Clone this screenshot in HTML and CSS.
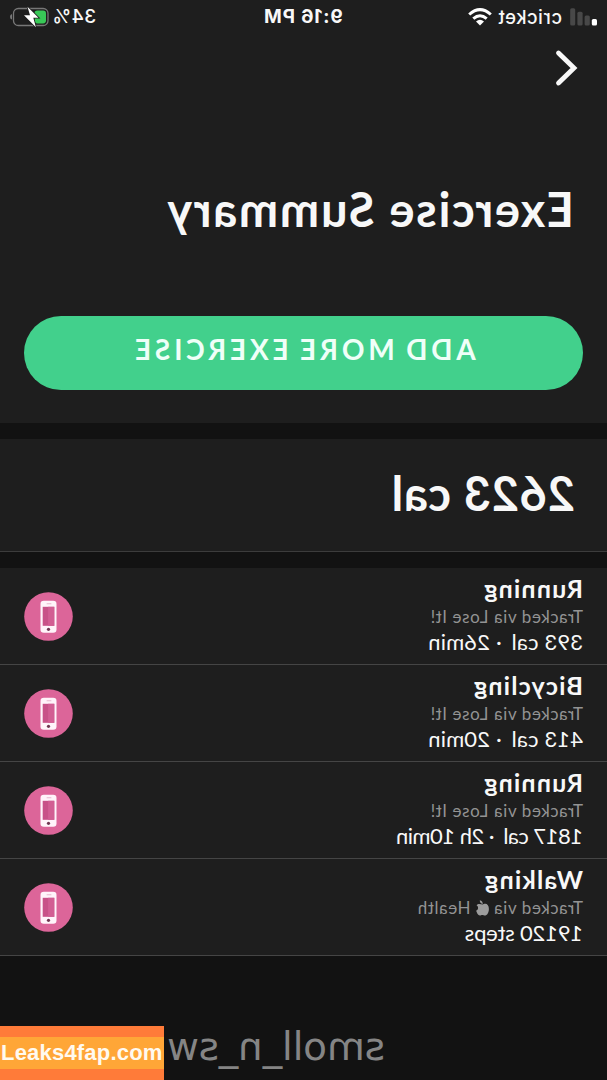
FILE: index.html
```
<!DOCTYPE html>
<html lang="en">
<head>
<meta charset="utf-8">
<title>Exercise Summary</title>
<link rel="stylesheet" href="styles.css">
</head>
<body>
<svg class="defs" width="0" height="0" aria-hidden="true">
  <symbol id="phone" viewBox="0 0 49 49">
    <circle cx="24.5" cy="24.5" r="24.3" fill="#dc6599"/>
    <rect x="16.5" y="8.7" width="16" height="32" rx="3.3" fill="#fff4fa"/>
    <rect x="18.7" y="14.8" width="11.6" height="19" fill="#c85288"/>
    <path d="M18.7 14.8h6.2v19h-6.2z" fill="#d25e93"/>
    <rect x="21.5" y="11.3" width="5" height="1" rx=".5" fill="#e7b8ce"/>
    <circle cx="24.5" cy="37.3" r="1.6" fill="#713752"/>
  </symbol>
</svg>
<main class="screen">
  <header class="top">
    <div class="status">
      <div class="carrier">
        <svg width="28" height="18" viewBox="0 0 28 18"><rect x="0" y="11" width="5.2" height="6.6" rx="1.5" fill="#fff"/><g fill="#484848"><rect x="7.2" y="7.5" width="5.2" height="10.1" rx="1.5"/><rect x="14.4" y="3.7" width="5.2" height="13.9" rx="1.5"/><rect x="21.8" y=".3" width="5" height="17.3" rx="1.5"/></g></svg>
        <span class="network">cricket</span>
        <svg class="wifi" width="24" height="18" viewBox="0 0 24 18" fill="none" stroke="#fff" stroke-width="3"><path d="M1.2 6.5Q12-3.2 22.8 6.5M5.3 10.7Q12 4.8 18.7 10.7"/><path d="M8 13.4q4-3.3 8 0l-4 4.2z" fill="#fff" stroke="none"/></svg>
      </div>
      <span class="clock">9:16 PM</span>
      <div class="power">
        <span class="percent">34%</span>
        <svg width="40" height="22" viewBox="0 0 40 22"><rect x="1" y="2.5" width="34.5" height="17" rx="4.8" fill="none" stroke="#777" stroke-width="1.3"/><path d="M37 8q2 .4 2 2.8T37 13.6z" fill="#777"/><rect x="3" y="4.6" width="11.5" height="12.8" rx="2.8" fill="#38c957"/><path d="M21.5.8 10.5 11.8h5.2l-2.6 9.4L25 9.2h-6z" fill="#fff" stroke="#1e1e1e" stroke-width="1.6" paint-order="stroke"/></svg>
      </div>
    </div>
    <svg class="back" width="24" height="38" viewBox="0 0 24 38"><path d="M19.5 4 4 19l15.5 15" fill="none" stroke="#f8f8f8" stroke-width="4.8" stroke-linecap="round"/></svg>
    <h1 class="title">Exercise Summary</h1>
    <button class="add">ADD MORE EXERCISE</button>
  </header>
  <section class="total">2623 cal</section>
  <section class="list">
    <article class="row"><div class="info"><h2 class="name">Running</h2><p class="source">Tracked via Lose It!</p><p class="detail">393 cal <span class="dot">·</span> 26min</p></div><svg class="badge"><use href="#phone"/></svg></article>
    <article class="row"><div class="info"><h2 class="name">Bicycling</h2><p class="source">Tracked via Lose It!</p><p class="detail">413 cal <span class="dot">·</span> 20min</p></div><svg class="badge"><use href="#phone"/></svg></article>
    <article class="row"><div class="info"><h2 class="name">Running</h2><p class="source">Tracked via Lose It!</p><p class="detail detail-long">1817 cal <span class="dot">·</span> 2h 10min</p></div><svg class="badge"><use href="#phone"/></svg></article>
    <article class="row"><div class="info"><h2 class="name">Walking</h2><p class="source">Tracked via <svg class="apple" width="13" height="16" viewBox="0 0 13 16" fill="#9c9c9c"><path d="M9.2.2Q9.3 3.5 6.2 3.9 6.2 1 9.2.2M6.5 4.4c1.1 0 2-.6 3.3-.5 1.1 0 2 .5 2.6 1.4-2.2 1.5-1.9 4.5.5 5.5-.8 2-1.9 4.8-3.7 4.8-1 0-1.5-.6-2.5-.6s-1.6.6-2.5.6C1.8 15.6 0 12 .1 8.9 0 5.8 1.7 3.8 3.7 3.8c1.2 0 1.9.6 2.8.6z"/></svg> Health</p><p class="detail detail-steps">19120 steps</p></div><svg class="badge"><use href="#phone"/></svg></article>
  </section>
  <footer class="user">smoll_n_sw</footer>
</main>
<aside class="banner"><span class="banner-text">Leaks4fap.com</span></aside>
</body>
</html>
```
FILE: styles.css
```
* { box-sizing: border-box; }
body { margin: 0; background: #121212; font-family: Lato, sans-serif; color: #f8f8f8; }
h1, h2, p { margin: 0; }
.defs { position: absolute; }
.screen { width: 607px; height: 1080px; overflow: hidden; transform: scaleX(-1); white-space: nowrap; background: #121212; }
.top { display: flex; flex-direction: column; height: 423px; background: #1e1e1e; }
.status { display: grid; grid-template-columns: 1fr auto 1fr; align-items: center; height: 33px; padding: 0 9px 0 10px; font-family: Inter, sans-serif; }
.carrier, .power { display: flex; align-items: center; }
.power { justify-content: flex-end; gap: 3px; }
.network { margin-left: 7px; font-size: 18.5px; font-weight: 500; letter-spacing: .55px; }
.wifi { margin-left: 6px; }
.clock { font-size: 19px; font-weight: 700; letter-spacing: .8px; }
.percent { font-size: 19px; font-weight: 500; letter-spacing: .3px; }
.back { margin: 16px 0 0 29px; }
.title { margin: 93px 0 0 33px; font-size: 47px; line-height: 58px; font-weight: 700; letter-spacing: 1.7px; }
.add { margin: 78px 24px 0; height: 74px; padding: 0 0 8px; border: 0; border-radius: 37px; background: #42d08c; color: #effff8; font: 700 28px/34px Lato, sans-serif; letter-spacing: 3.8px; word-spacing: -3px; }
.total { height: 113px; margin-top: 16px; padding: 25px 0 0 32px; border-bottom: 1px solid #3c3c3c; background: #1e1e1e; font-size: 47px; line-height: 58px; font-weight: 700; letter-spacing: .7px; }
.list { margin-top: 16px; }
.row { display: flex; justify-content: space-between; height: 97px; padding: 5px 24px 0; border-bottom: 1px solid #454545; background: #1e1e1e; }
.name { height: 32px; font-size: 25px; line-height: 30px; font-weight: 700; letter-spacing: 1.2px; }
.source { height: 24px; font-size: 17px; line-height: 24px; letter-spacing: .62px; color: #939393; }
.detail { margin-top: -1px; font-size: 22px; line-height: 28px; letter-spacing: .15px; }
.detail-long { letter-spacing: -.5px; }
.detail-steps { letter-spacing: -.2px; }
.dot { margin-left: 4px; }
.badge { width: 49px; height: 49px; margin-top: 19px; }
.apple { vertical-align: -2px; }
.user { margin: 68px 0 0 222px; font: 39px/46px "DejaVu Sans", sans-serif; letter-spacing: -.2px; color: #858585; }
.banner { position: absolute; left: 0; top: 1026px; width: 164px; height: 54px; padding-top: 11px; background: #ff7b39; }
.banner-text { display: block; height: 32px; padding-left: 1px; background: #ffa637; color: #fffaf0; font: 700 22px/32px "Liberation Sans", sans-serif; letter-spacing: .2px; }
```
